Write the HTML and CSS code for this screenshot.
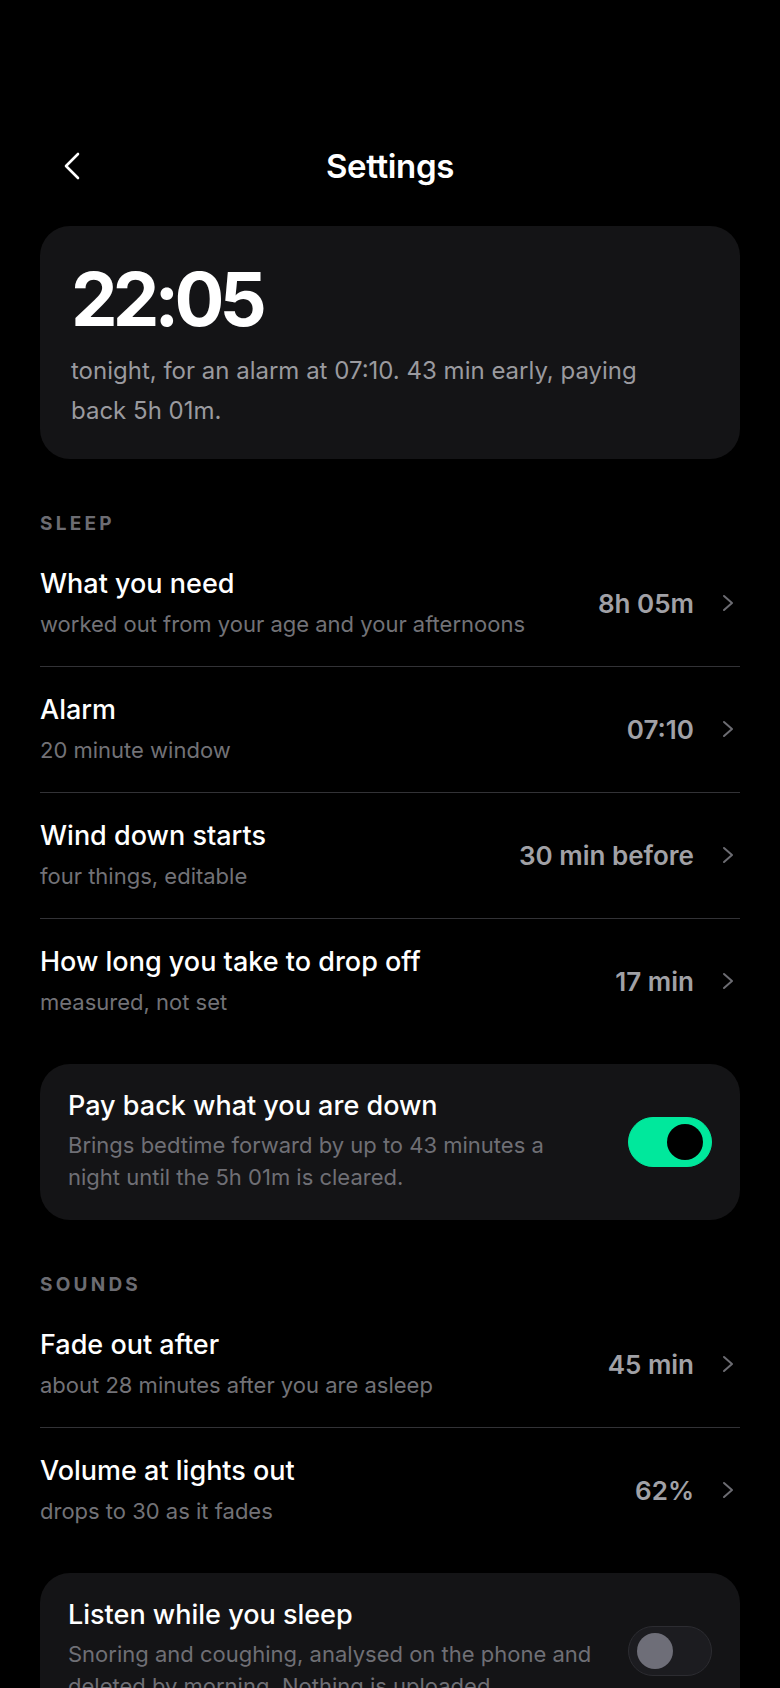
FILE: index.html
```html
<!DOCTYPE html>
<html lang="en">
<head>
    <meta charset="UTF-8">
    <meta name="viewport" content="width=device-width, initial-scale=1.0">
    <title>Settings</title>
    <link rel="stylesheet" href="styles.css">
</head>
<body>
    <div class="screen">
        <div class="header">
            <button class="back" aria-label="Back">
                <svg width="18" height="28" viewBox="0 0 18 28"><path d="M15 2 L3 14 L15 26" fill="none" stroke="#fff" stroke-width="2.6" stroke-linecap="round" stroke-linejoin="round"/></svg>
            </button>
            <h1 class="title">Settings</h1>
            <span></span>
        </div>

        <div class="bedtime">
            <div class="bedtime-time">22:05</div>
            <p class="bedtime-note">tonight, for an alarm at 07:10. 43 min early, paying back 5h 01m.</p>
        </div>

        <h2 class="group-label">Sleep</h2>
        <ul class="list">
            <li class="row">
                <div class="row-text">
                    <div class="row-title">What you need</div>
                    <div class="row-sub">worked out from your age and your afternoons</div>
                </div>
                <div class="row-value">8h 05m</div>
                <svg class="chev" width="12" height="18" viewBox="0 0 12 18"><path d="M2 2 L10 9 L2 16" fill="none" stroke="#6c6c72" stroke-width="2" stroke-linecap="round" stroke-linejoin="round"/></svg>
            </li>
            <li class="row">
                <div class="row-text">
                    <div class="row-title">Alarm</div>
                    <div class="row-sub">20 minute window</div>
                </div>
                <div class="row-value">07:10</div>
                <svg class="chev" width="12" height="18" viewBox="0 0 12 18"><path d="M2 2 L10 9 L2 16" fill="none" stroke="#6c6c72" stroke-width="2" stroke-linecap="round" stroke-linejoin="round"/></svg>
            </li>
            <li class="row">
                <div class="row-text">
                    <div class="row-title">Wind down starts</div>
                    <div class="row-sub">four things, editable</div>
                </div>
                <div class="row-value">30 min before</div>
                <svg class="chev" width="12" height="18" viewBox="0 0 12 18"><path d="M2 2 L10 9 L2 16" fill="none" stroke="#6c6c72" stroke-width="2" stroke-linecap="round" stroke-linejoin="round"/></svg>
            </li>
            <li class="row">
                <div class="row-text">
                    <div class="row-title">How long you take to drop off</div>
                    <div class="row-sub">measured, not set</div>
                </div>
                <div class="row-value">17 min</div>
                <svg class="chev" width="12" height="18" viewBox="0 0 12 18"><path d="M2 2 L10 9 L2 16" fill="none" stroke="#6c6c72" stroke-width="2" stroke-linecap="round" stroke-linejoin="round"/></svg>
            </li>
        </ul>

        <div class="toggle-card">
            <div class="toggle-text">
                <div class="toggle-title">Pay back what you are down</div>
                <div class="toggle-desc">Brings bedtime forward by up to 43 minutes a night until the 5h 01m is cleared.</div>
            </div>
            <div class="switch on"><span class="knob"></span></div>
        </div>

        <h2 class="group-label">Sounds</h2>
        <ul class="list">
            <li class="row">
                <div class="row-text">
                    <div class="row-title">Fade out after</div>
                    <div class="row-sub">about 28 minutes after you are asleep</div>
                </div>
                <div class="row-value">45 min</div>
                <svg class="chev" width="12" height="18" viewBox="0 0 12 18"><path d="M2 2 L10 9 L2 16" fill="none" stroke="#6c6c72" stroke-width="2" stroke-linecap="round" stroke-linejoin="round"/></svg>
            </li>
            <li class="row">
                <div class="row-text">
                    <div class="row-title">Volume at lights out</div>
                    <div class="row-sub">drops to 30 as it fades</div>
                </div>
                <div class="row-value">62%</div>
                <svg class="chev" width="12" height="18" viewBox="0 0 12 18"><path d="M2 2 L10 9 L2 16" fill="none" stroke="#6c6c72" stroke-width="2" stroke-linecap="round" stroke-linejoin="round"/></svg>
            </li>
        </ul>

        <div class="toggle-card">
            <div class="toggle-text">
                <div class="toggle-title">Listen while you sleep</div>
                <div class="toggle-desc">Snoring and coughing, analysed on the phone and deleted by morning. Nothing is uploaded.</div>
            </div>
            <div class="switch"><span class="knob"></span></div>
        </div>
    </div>
</body>
</html>
```

FILE: styles.css
```css
html, body {
    margin: 0;
    padding: 0;
    background: #000;
}
body {
    font-family: Inter, "Noto Sans", sans-serif;
    color: #fff;
}
.screen {
    width: 780px;
    height: 1688px;
    overflow: hidden;
    padding: 130px 40px 0;
    box-sizing: border-box;
}

/* header */
.header {
    display: grid;
    grid-template-columns: 1fr auto 1fr;
    align-items: center;
    height: 72px;
}
.back {
    justify-self: start;
    margin-left: 23px;
    padding: 0;
    border: 0;
    background: none;
    display: flex;
}
.title {
    margin: 0;
    font-size: 33px;
    font-weight: 600;
    letter-spacing: -0.01em;
}

/* bedtime card */
.bedtime {
    margin-top: 24px;
    background: #141416;
    border-radius: 30px;
    padding: 36px 31px 28px;
}
.bedtime-time {
    font-size: 74px;
    font-weight: 700;
    line-height: 1;
    letter-spacing: -0.065em;
}
.bedtime-note {
    margin: 15px 0 0;
    font-size: 24px;
    line-height: 40px;
    color: #9a9a9f;
    padding-right: 40px;
}

/* groups */
.group-label {
    margin: 53px 0 5px;
    font-size: 19px;
    line-height: 24px;
    font-weight: 700;
    letter-spacing: 0.17em;
    text-transform: uppercase;
    color: #6c6c72;
}
.list {
    list-style: none;
    margin: 0;
    padding: 0;
}
.row {
    display: flex;
    align-items: center;
    padding: 26px 0 27px;
    border-bottom: 1px solid #323236;
}
.row:last-child {
    border-bottom: 0;
}
.row-text {
    flex: 1;
    min-width: 0;
}
.row-title {
    font-size: 27px;
    line-height: 34px;
    font-weight: 500;
}
.row-sub {
    margin-top: 8px;
    font-size: 22px;
    line-height: 30px;
    color: #727277;
}
.row-value {
    font-size: 26px;
    font-weight: 600;
    color: #a1a1a6;
}
.chev {
    margin: 0 6px 0 28px;
    flex: none;
}

/* toggle cards */
.toggle-card {
    margin-top: 20px;
    display: flex;
    align-items: center;
    gap: 34px;
    background: #141416;
    border-radius: 30px;
    padding: 26px 28px 27px;
}
.toggle-text {
    flex: 1;
}
.toggle-title {
    font-size: 27px;
    line-height: 32px;
    font-weight: 500;
}
.toggle-desc {
    margin-top: 7px;
    font-size: 22px;
    line-height: 32px;
    color: #6f6f75;
}
.switch {
    flex: none;
    width: 84px;
    height: 50px;
    border-radius: 25px;
    box-sizing: border-box;
    padding: 7px 8px;
    background: #1c1c20;
    border: 1px solid #2c2c31;
    display: flex;
    align-items: center;
}
.switch .knob {
    width: 36px;
    height: 36px;
    border-radius: 50%;
    background: #6e6e78;
}
.switch.on {
    background: #00e89c;
    border-color: #00e89c;
    justify-content: flex-end;
}
.switch.on .knob {
    background: #000;
}
```
